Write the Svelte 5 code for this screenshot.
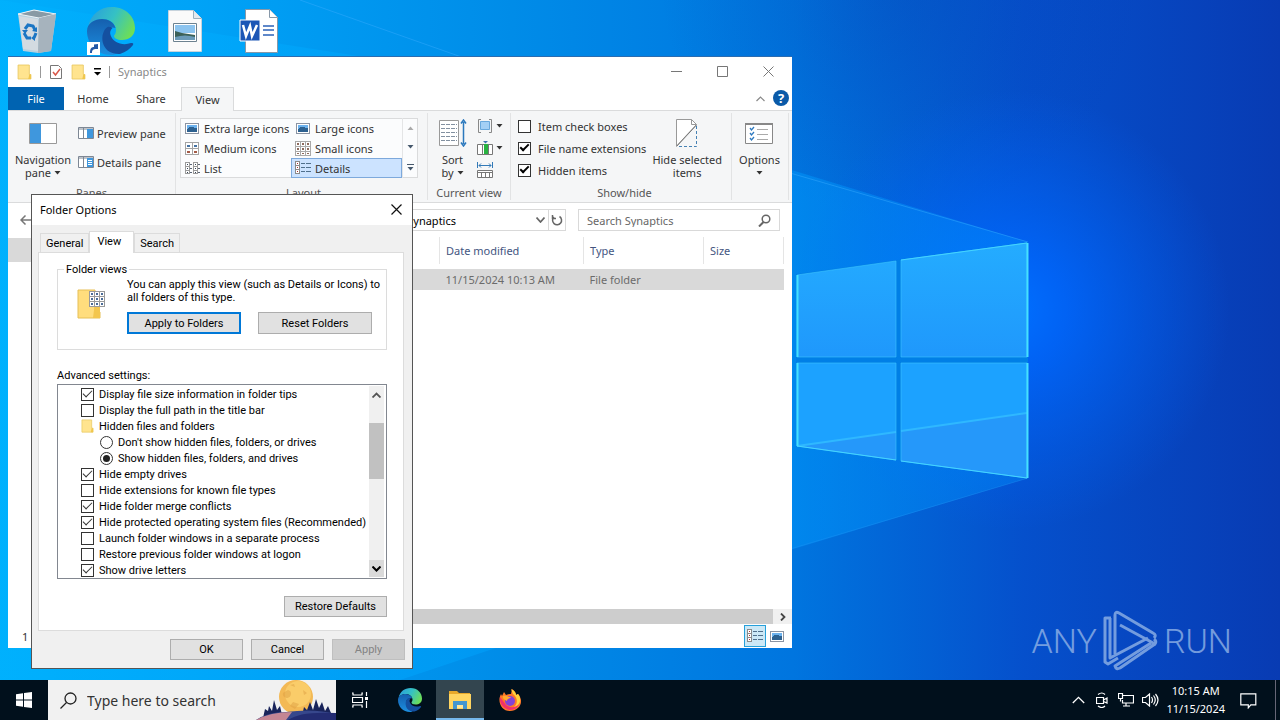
<script>
  /*
  * Explorer ribbon
  * */

  const tabs = ['Home', 'Share', 'View'];
  let activeTab = $state('View');

  const layouts = [
    { name: 'Extra large icons', icon: 'picture' },
    { name: 'Large icons', icon: 'picture' },
    { name: 'Medium icons', icon: 'medium' },
    { name: 'Small icons', icon: 'small' },
    { name: 'List', icon: 'list' },
    { name: 'Details', icon: 'details' },
  ];
  let layout = $state('Details');

  let showHide = $state([
    { label: 'Item check boxes', checked: false },
    { label: 'File name extensions', checked: true },
    { label: 'Hidden items', checked: true },
  ]);

  const files = [
    { name: '', modified: '11/15/2024 10:13 AM', type: 'File folder', size: '' },
  ];

  /*
  * Folder Options dialog
  * */

  const dialogTabs = ['General', 'View', 'Search'];
  let dialogTab = $state('View');

  let hiddenFiles = $state('show');

  let settings = $state([
    { label: 'Display file size information in folder tips', checked: true },
    { label: 'Display the full path in the title bar', checked: false },
    {
      label: 'Hidden files and folders',
      options: [
        { value: 'hide', label: "Don't show hidden files, folders, or drives" },
        { value: 'show', label: 'Show hidden files, folders, and drives' },
      ],
    },
    { label: 'Hide empty drives', checked: true },
    { label: 'Hide extensions for known file types', checked: false },
    { label: 'Hide folder merge conflicts', checked: true },
    { label: 'Hide protected operating system files (Recommended)', checked: true },
    { label: 'Launch folder windows in a separate process', checked: false },
    { label: 'Restore previous folder windows at logon', checked: false },
    { label: 'Show drive letters', checked: true },
  ]);
</script>

{#snippet folder(w, h)}
  <svg width={w} height={h} viewBox="0 0 14 16" preserveAspectRatio="none">
    <path d="M1 1h10.500v9.500H13V15H1z" fill="#ffe48f" stroke="#e8c860" stroke-width=".8" />
    <path d="M11.500 10.500H13V15h-2.500z" fill="#f0c64c" />
  </svg>
{/snippet}

{#snippet edge(size)}
  <svg width={size} height={size} viewBox="0 0 48 48">
    <path d="M1 20C4 7 13 0 25 0c14 0 23 10 23 21 0 8-6 12-13 12-5 0-8-2-8-4 0-1 2-2 2-6 0-6-6-11-13-11C9 12 3 15 1 20z" fill="url(#edge-green)" />
    <path d="M0 24C0 16 8 12 15 12c6 0 12 3 13.500 9-6-2-12.500 2-12.500 9 0 8 6 14 13 17-2 1-4 1-5 1C10 48 0 37 0 24z" fill="url(#edge-blue)" />
    <path d="M20.500 20c-9 6-7 28 12.500 27 6-2 10-5 13-9 1-2-1-2-2-2-8 3-18 0-20.500-8-1-3 0-5 2-7-1.500-1-3.500-1.500-5-1z" fill="#1450a0" />
  </svg>
{/snippet}

{#snippet layoutIcon(kind)}
  <svg width="16" height="16" viewBox="0 0 16 16" shape-rendering="crispEdges">
    {#if kind === 'picture'}
      <path d="M1.500 3.500h13v10h-13z" fill="#fff" stroke="#8b94a3" />
      <path d="M3 5h10v4H3z" fill="#6cb2ee" />
      <path d="M3 9l3-2 7 1v4H3z" fill="#2d6190" />
    {:else if kind === 'medium'}
      <path d="M1.500 2.500h13v12h-13zM8 2v13M1 8.500h14" fill="#fff" stroke="#a4a4a4" />
      <path d="M3 5h3v2H3zM10 5h3v2h-3z" fill="#4573a4" />
      <path d="M3 11h3v2H3zM10 11h3v2h-3z" fill="#a45c48" />
    {:else if kind === 'small'}
      <path d="M.500 1.500h15v14H.500zM5.500 1v15M10.500 1v15M0 6.500h16M0 11.500h16" fill="#fff" stroke="#a9a9a9" />
      <path d="M2 3h2v2H2zm5 0h2v2H7zm5 0h2v2h-2zM2 8h2v2H2zm5 0h2v2H7zm5 0h2v2h-2zM2 13h2v1H2zm5 0h2v1H7zm5 0h2v1h-2z" fill="#8d6a5c" />
    {:else if kind === 'list'}
      <path d="M1.500 2.500h4v11h-4zM1 6h5M1 10h5M9.500 2.500h4v11h-4zM9 6h5M9 10h5" fill="#fff" stroke="#9a9a9a" />
      <path d="M3 4h1v1H3zm0 4h1v1H3zm0 4h1v1H3zm8-8h1v1h-1zm0 4h1v1h-1zm0 4h1v1h-1z" fill="#345" />
      <path d="M6 4h2M6 8h2M6 12h2M14 4h2M14 8h2M14 12h2" stroke="#5a6575" />
    {:else}
      <path d="M.500 1.500h4v12h-4zM0 5.500h5M0 9.500h5" fill="#fff" stroke="#8a8a8a" />
      <path d="M2 3h1v1H2zm0 4h1v1H2zm0 4h1v1H2z" fill="#a33" />
      <path d="M6 3.500h4M11 3.500h5M6 7.500h4M11 7.500h5M6 11.500h4M11 11.500h5" stroke="#50708c" />
    {/if}
  </svg>
{/snippet}

{#snippet caret(color = '#333')}
  <svg class="caret" width="7" height="4" viewBox="0 0 7 4"><path d="M.500 0h6l-3 3.500z" fill={color} /></svg>
{/snippet}

<div class="screen">
  <main class="desktop">
    <svg class="wallpaper" viewBox="0 0 1280 720" preserveAspectRatio="xMidYMid slice">
      <defs>
        <linearGradient id="sky">
          <stop offset="0" stop-color="#00aefb" />
          <stop offset=".15" stop-color="#00a3f7" />
          <stop offset=".4" stop-color="#008ce8" />
          <stop offset=".62" stop-color="#0075df" />
          <stop offset=".8" stop-color="#0550cc" />
          <stop offset="1" stop-color="#083bb3" />
        </linearGradient>
        <radialGradient id="glow" gradientUnits="userSpaceOnUse" cx="1010" cy="310" r="220">
          <stop offset="0" stop-color="#0070ff" />
          <stop offset=".25" stop-color="#0068ff" stop-opacity=".8" />
          <stop offset="1" stop-color="#0060f0" stop-opacity="0" />
        </radialGradient>
        <radialGradient id="shade" gradientUnits="userSpaceOnUse" cx="900" cy="-20" r="240">
          <stop offset="0" stop-color="#083ba8" stop-opacity=".3" />
          <stop offset="1" stop-color="#083ba8" stop-opacity="0" />
        </radialGradient>
        <linearGradient id="beam">
          <stop offset="0" stop-color="#00b4ff" stop-opacity=".7" />
          <stop offset=".75" stop-color="#009dff" stop-opacity=".75" />
          <stop offset="1" stop-color="#0095ff" stop-opacity=".6" />
        </linearGradient>
        <linearGradient id="pane" x2="0" y2="1">
          <stop offset="0" stop-color="#24acff" />
          <stop offset="1" stop-color="#1f98fc" />
        </linearGradient>
        <linearGradient id="edge-green" x1="0" y1=".2" x2="1" y2=".6">
          <stop offset="0" stop-color="#2a9fdc" />
          <stop offset=".5" stop-color="#35c1c4" />
          <stop offset="1" stop-color="#6ede56" />
        </linearGradient>
        <linearGradient id="edge-blue" x2="0" y2="1">
          <stop offset="0" stop-color="#155fae" />
          <stop offset="1" stop-color="#1c8fe0" />
        </linearGradient>
      </defs>
      <path d="M0 0h1280v720H0z" fill="url(#sky)" />
      <path d="M0 0h1280v720H0z" fill="url(#shade)" />
      <path d="M0 0h1280v720H0z" fill="url(#glow)" />
      <path d="M0 0L480 75 1028 242V478L790 550 400 680H0z" fill="url(#beam)" opacity=".6" />
      <path d="M300 0L790 173 1028 242" fill="none" stroke="#39adff" opacity=".45" />
      <path d="M1028 478L790 549" fill="none" stroke="#2191f2" opacity=".4" />
      <path d="M796 274L1028 242V478L796 446z" fill="#007fe6" />
      <path d="M797 275L896 261V357H797zM901 260L1027 243V357H901z" fill="url(#pane)" />
      <path d="M797 363H896V460L797 446zM901 363H1027V478L901 461z" fill="#1ca2ff" />
      <path d="M797 446L896 432V460zM901 431L1027 413V478L901 461z" fill="#2598fa" />
      <path d="M797 446L896 432M901 431L1027 413" stroke="#2fb8ff" stroke-width="2" />
      <path d="M797 357V275L896 261V357zM901 357V260L1027 243V357zM797 363H896V460L797 446zM901 363H1027V478L901 461z" fill="none" stroke="#3cc4ff" opacity=".6" />
      <path d="M797.500 275V357M797.500 363V446M1027.500 478V363M1027.500 357V243" fill="none" stroke="#45e0ff" stroke-width="2" />
      <path d="M797 446L896 460M901 461L1027 478M1027 243L901 260" fill="none" stroke="#45d4ff" />
    </svg>

    <div class="shortcuts">
      <button aria-label="Recycle Bin">
        <svg width="40" height="44" viewBox="0 0 40 44">
          <path d="M1 5L17 1 39 5 34 42 21 44 6 42z" fill="#c6d3dc" opacity=".92" />
          <path d="M1 5L17 1 39 5 22 9z" fill="#889aa5" stroke="#eef4f8" />
          <path d="M22 9L39 5 34 42 21 44z" fill="#a6b3bd" />
          <path d="M2 7l19 3v32L6 40z" fill="#d3dbe1" />
          <path d="M8 20l3-4 5 1 2 4M7 24l3 5h4M19 24l-2 5" fill="none" stroke="#1b76c4" stroke-width="3" />
          <path d="M15 22l5 1 0-5zM5 21l6 0-3 4zM18 26v6l-4-3z" fill="#1b76c4" />
        </svg>
      </button>
      <button aria-label="Microsoft Edge" class="linked">
        {@render edge(48)}
        <svg class="arrow" width="13" height="13" viewBox="0 0 13 13">
          <path d="M0 0h13v13H0z" fill="#fff" />
          <path d="M3 11c0-4 1-6 4-6V2.500L11 2v5H9.500C6 7 5 8 5 11z" fill="#2458a6" />
        </svg>
      </button>
      <button aria-label="Image file">
        <svg width="34" height="42" viewBox="0 0 34 42">
          <path d="M.500.500h25l8 8v33H.500z" fill="#fafafa" stroke="#c7d3dc" />
          <path d="M25.500.500v8h8" fill="#e4e9ed" stroke="#9cb0be" />
          <path d="M5.500 13.500h23v18h-23z" fill="#fff" stroke="#6d8290" />
          <path d="M7 15h20v8H7z" fill="#8cc4ef" />
          <path d="M7 21l7 2 13 2v5H7z" fill="#3c6158" />
          <path d="M7 27q10-3 20 0v3H7z" fill="#6a9ab8" />
        </svg>
      </button>
      <button aria-label="Word document">
        <svg width="40" height="44" viewBox="0 0 40 44">
          <path d="M6.500.500h24l8 8v35h-32z" fill="#fff" stroke="#8798a8" />
          <path d="M30.500.500v8h8" fill="#fff" stroke="#8798a8" />
          <path d="M24 17h11M24 21h11M24 26h11" stroke="#2b62b8" stroke-width="1.500" />
          <path d="M1 11h20v21H1z" fill="#1c56b6" stroke="#fff" />
          <path d="M4 16l3 11 4-10 2 10 5-11" fill="none" stroke="#fff" stroke-width="2.500" />
        </svg>
      </button>
    </div>

    <div class="watermark">
      <span>ANY</span>
      <svg width="55" height="62" viewBox="0 0 55 62">
        <g fill="none" stroke="#8fb2e6" stroke-width="3" stroke-linejoin="round">
          <path d="M8 8L2 8 2 52 5 54 15 48" />
          <path d="M12 44V5Q12 1 16 3L50 23Q54 25 51 28" />
          <path d="M17 15L52 34Q54 31 51 29" />
          <path d="M7 8V48L45 28M52 34L17 58Q13 60 12 56L48 33" />
        </g>
      </svg>
      <span>RUN</span>
    </div>

    <section class="explorer">
      <header class="titlebar">
        {@render folder(15, 16)}
        <i></i>
        <svg width="14" height="16" viewBox="0 0 14 16">
          <path d="M1.500 1.500h8l3 3v10h-11z" fill="#fff" stroke="#777" />
          <path d="M4 8l2.500 3L11 5" fill="none" stroke="#d8584a" stroke-width="1.500" />
        </svg>
        {@render folder(15, 16)}
        <svg width="7" height="8" viewBox="0 0 7 8"><path d="M0 0h7v1.500H0zM0 4h7L3.500 7.500z" /></svg>
        <i></i>
        <span>Synaptics</span>
        <div class="controls">
          <button aria-label="Minimize"><svg width="11" height="11"><path d="M0 5.500h11" stroke="#777" /></svg></button>
          <button aria-label="Maximize"><svg width="11" height="11"><path d="M.500.500h10v10H.500z" fill="none" stroke="#777" /></svg></button>
          <button aria-label="Close"><svg width="11" height="11"><path d="M.500.500l10 10m0-10l-10 10" stroke="#777" /></svg></button>
        </div>
      </header>

      <nav class="tabs">
        <button class="file">File</button>
        {#each tabs as tab}
          <button class:active={tab === activeTab} onclick={() => activeTab = tab}>{tab}</button>
        {/each}
        <button class="collapse" aria-label="Collapse ribbon"><svg width="9" height="6"><path d="M.500 5L4.500 1l4 4" fill="none" stroke="#888" stroke-width="1.200" /></svg></button>
        <button class="help" aria-label="Help">?</button>
      </nav>

      <div class="ribbon">
        <div class="group panes">
          <div class="tools">
            <button class="big">
              <svg width="28" height="21"><path d="M.500.500h27v20H.500z" fill="#fff" stroke="#999" /><path d="M1 1h11v19H1z" fill="#3f97dd" /></svg>
              <span>Navigation<br />pane {@render caret()}</span>
            </button>
            <div class="stack">
              <button>
                <svg width="16" height="12"><path d="M.500.500h15v11H.500zM5.500 1v10M1 2h14" fill="#fff" stroke="#7d8794" /><path d="M9 2h6v9H9z" fill="#3f97dd" /></svg>
                Preview pane
              </button>
              <button>
                <svg width="16" height="12"><path d="M.500.500h15v11H.500zM5.500 1v10M1 2h14" fill="#fff" stroke="#7d8794" /><path d="M9 2h6v9H9z" fill="#3f97dd" /><path d="M10 4.500h4M10 6.500h4M10 8.500h4" stroke="#fff" /></svg>
                Details pane
              </button>
            </div>
          </div>
          <h4>Panes</h4>
        </div>

        <div class="group layouts">
          <div class="tools">
            <div class="gallery">
              <div class="choices">
                {#each layouts as item}
                  <button class:active={item.name === layout} onclick={() => layout = item.name}>
                    {@render layoutIcon(item.icon)}{item.name}
                  </button>
                {/each}
              </div>
              <div class="spinner">
                <button aria-label="Previous row"><svg width="7" height="4"><path d="M.500 4h6l-3-3.500z" fill="#aaa" /></svg></button>
                <button aria-label="Next row">{@render caret('#46586c')}</button>
                <button aria-label="More"><svg width="7" height="7"><path d="M0 0h7v1H0zM.500 3h6l-3 3.500z" fill="#46586c" /></svg></button>
              </div>
            </div>
          </div>
          <h4>Layout</h4>
        </div>

        <div class="group current">
          <div class="tools">
            <button class="big">
              <svg width="28" height="28" viewBox="0 0 28 28">
                <path d="M.500 1.500h19v25H.500z" fill="#fff" stroke="#999" />
                <path d="M2 5.500h16M2 9.500h16M2 13.500h16M2 17.500h16M2 21.500h16" stroke="#8290a0" stroke-dasharray="4 1" />
                <path d="M24.500 3v22M22 4.500L24.500 1 27 4.500M22 23.500l2.500 3.500 2.500-3.500" fill="none" stroke="#2b78bd" stroke-width="1.500" />
              </svg>
              <span>Sort<br />by {@render caret()}</span>
            </button>
            <div class="stack">
              <button aria-label="Group by">
                <svg width="16" height="16"><path d="M4 1.500H1.500v13H4M12 1.500h2.500v13H12" fill="none" stroke="#888" /><path d="M3.500 3.500h9v8h-9z" fill="#a4d0f5" stroke="#6aa9dd" /></svg>
                {@render caret()}
              </button>
              <button aria-label="Add columns">
                <svg width="16" height="16"><path d="M.500 4.500h15v10H.500zM5.500 5v9M11.500 5v9" fill="#fff" stroke="#777" /><path d="M7 4h4v10H7z" fill="#27b340" /><path d="M6 1h5L8.500 3.500z" fill="#3c74ac" /></svg>
                {@render caret()}
              </button>
              <button aria-label="Size all columns to fit">
                <svg width="16" height="16"><path d="M.500 8.500h15v7H.500zM0 10.500h16M4.500 10v5M8.500 10v5M12.500 10v5" fill="#fff" stroke="#777" /><path d="M.500 0v6M15.500 0v6M2 3.500h12M4 1.500l-2 2 2 2M12 1.500l2 2-2 2" fill="none" stroke="#3279b7" /></svg>
              </button>
            </div>
          </div>
          <h4>Current view</h4>
        </div>

        <div class="group showhide">
          <div class="tools">
            <div class="stack">
              {#each showHide as item}
                <label><input type="checkbox" class="bold" bind:checked={item.checked} />{item.label}</label>
              {/each}
            </div>
            <button class="big">
              <svg width="22" height="30" viewBox="0 0 22 30">
                <path d="M.500 28V1.500h15l5 5L.500 28z" fill="#fff" stroke="#999" />
                <path d="M15.500 1.500v5h5" fill="none" stroke="#999" />
                <path d="M20.500 8v20.500H1" fill="none" stroke="#4681b3" stroke-dasharray="3 2" />
                <path d="M.500 28.500L20.500 7" stroke="#777" />
              </svg>
              <span>Hide selected<br />items</span>
            </button>
          </div>
          <h4>Show/hide</h4>
        </div>

        <div class="group options">
          <div class="tools">
            <button class="big">
              <svg width="28" height="21" viewBox="0 0 28 21">
                <path d="M.500.500h27v20H.500z" fill="#fff" stroke="#888" />
                <path d="M0 0h28v2H0z" fill="#888" />
                <path d="M5 5l1.500 2L9 4M5 10l1.500 2L9 9M5 15l1.500 2L9 14" fill="none" stroke="#2f7ac0" stroke-width="1.300" />
                <path d="M12 6.500h11M12 11.500h11M12 16.500h11" stroke="#aaa" />
              </svg>
              <span>Options<br />{@render caret()}</span>
            </button>
          </div>
        </div>
      </div>

      <div class="navbar">
        <button aria-label="Back"><svg width="12" height="10"><path d="M12 5H1M5.500.500L1 5l4.500 4.500" fill="none" stroke="#777" stroke-width="1.500" /></svg></button>
        <div class="address">
          <span>Synaptics</span>
          <button aria-label="Previous locations"><svg width="9" height="6"><path d="M.500.500l4 4.500 4-4.500" fill="none" stroke="#666" stroke-width="1.700" /></svg></button>
          <button class="refresh" aria-label="Refresh"><svg width="12" height="12"><path d="M3 3A4.500 4.500 0 1 0 8.500 2.500M1.500 1V4.500H5" fill="none" stroke="#666" stroke-width="1.500" /></svg></button>
        </div>
        <label class="search">
          <input type="text" placeholder="Search Synaptics" aria-label="Search Synaptics" />
          <svg width="13" height="13"><circle cx="8" cy="5" r="3.800" fill="none" stroke="#666" stroke-width="1.500" /><path d="M5.500 8L1 12.500" stroke="#666" stroke-width="2" /></svg>
        </label>
      </div>

      <div class="content">
        <aside><div></div></aside>
        <div class="listing">
          <table>
            <thead>
              <tr><th aria-label="Name"></th><th>Date modified</th><th>Type</th><th>Size</th></tr>
            </thead>
            <tbody>
              {#each files as file}
                <tr><td>{file.name}</td><td>{file.modified}</td><td>{file.type}</td><td>{file.size}</td></tr>
              {/each}
            </tbody>
          </table>
          <div class="hscroll">
            <div class="thumb"></div>
            <button aria-label="Scroll right"><svg width="6" height="8"><path d="M1 .500L4.500 4 1 7.500" fill="none" stroke="#444" stroke-width="1.800" /></svg></button>
          </div>
        </div>
      </div>

      <footer class="status">
        <span>1</span>
        <button class="active" aria-label="Details view">{@render layoutIcon('details')}</button>
        <button aria-label="Large icons view">{@render layoutIcon('picture')}</button>
      </footer>
    </section>

    <section class="dialog" role="dialog" aria-label="Folder Options">
      <header>
        <span>Folder Options</span>
        <button aria-label="Close"><svg width="11" height="11"><path d="M.500.500l10 10m0-10l-10 10" stroke="#111" stroke-width="1.200" /></svg></button>
      </header>

      <nav>
        {#each dialogTabs as tab}
          <button class:active={tab === dialogTab} onclick={() => dialogTab = tab}>{tab}</button>
        {/each}
      </nav>

      <div class="panel">
        <fieldset>
          <legend>Folder views</legend>
          <div class="views">
            <svg width="28" height="32" viewBox="0 0 28 32">
              <path d="M1 2h17v22h5v6H1z" fill="#ffdd7d" stroke="#e6bf56" />
              <path d="M18 14h5v16h-7z" fill="#f3c64e" />
              {#each Array(9) as _, i}
                <rect x={12.5 + (i % 3) * 5} y={3.5 + Math.floor(i / 3) * 5} width="5" height="5" fill="#fff" stroke="#9a9a9a" />
                <rect x={14 + (i % 3) * 5} y={5 + Math.floor(i / 3) * 5} width="2" height="2" fill="#4b6c98" />
              {/each}
            </svg>
            <div>
              <p>You can apply this view (such as Details or Icons) to<br />all folders of this type.</p>
              <div class="pair">
                <button class="btn default">Apply to Folders</button>
                <button class="btn">Reset Folders</button>
              </div>
            </div>
          </div>
        </fieldset>

        <h5>Advanced settings:</h5>
        <div class="settings">
          <ul>
            {#each settings as item}
              {#if item.options}
                <li class="heading">{@render folder(13, 14)}{item.label}</li>
                {#each item.options as option}
                  <li class="nested">
                    <label><input type="radio" name="hidden-files" value={option.value} bind:group={hiddenFiles} />{option.label}</label>
                  </li>
                {/each}
              {:else}
                <li><label><input type="checkbox" bind:checked={item.checked} />{item.label}</label></li>
              {/if}
            {/each}
          </ul>
          <div class="vscroll">
            <button aria-label="Scroll up"><svg width="9" height="6"><path d="M.500 5.500l4-4 4 4" fill="none" stroke="#555" stroke-width="1.800" /></svg></button>
            <div class="track"><div class="thumb"></div></div>
            <button class="down" aria-label="Scroll down"><svg width="9" height="6"><path d="M.500.500l4 4 4-4" fill="none" stroke="#000" stroke-width="2" /></svg></button>
          </div>
        </div>

        <button class="btn restore">Restore Defaults</button>
      </div>

      <footer>
        <button class="btn">OK</button>
        <button class="btn">Cancel</button>
        <button class="btn" disabled>Apply</button>
      </footer>
    </section>
  </main>

  <footer class="taskbar">
    <button aria-label="Start"><svg width="16" height="16"><path d="M0 2.300L7 1.300V7.500H0zM8 1.100L16 0V7.500H8zM0 8.500H7V14.700L0 13.700zM8 8.500H16V16L8 14.900z" fill="#fff" /></svg></button>
    <label class="find">
      <svg width="17" height="17"><circle cx="10.500" cy="6.500" r="5.500" fill="none" stroke="#222" stroke-width="1.300" /><path d="M6.500 10.500L.500 16.500" stroke="#222" stroke-width="1.300" /></svg>
      <input type="text" placeholder="Type here to search" aria-label="Type here to search" />
      <svg width="80" height="40" viewBox="0 0 80 40">
        <circle cx="40" cy="17" r="17" fill="#f3b955" />
        <circle cx="42" cy="14" r="13" fill="#ffd976" opacity=".6" />
        <path d="M27 13a4 4 0 1 0 5-3zM37 22l6 2-4 5-5-3zM47 10l4 3-3 2zM34 5l4-1 1 3z" fill="#de9f43" opacity=".5" />
        <path d="M7 38l2-9 3 2 1-5 3 5 2-11 3 10 3-4 2 9 3-2 2 7zM46 36l2-9 3 3 3-8 3 8 3-11 3 9 3-6 3 9 3-5 3 7v6H46z" fill="#19245a" />
        <path d="M0 40q12-8 30-8 28-4 50 2v6z" fill="#37478c" />
        <path d="M0 40q14-8 36-8l-6 8z" fill="#c48694" />
        <path d="M32 40q12-9 48-7v7z" fill="#232c72" />
      </svg>
    </label>
    <button aria-label="Task View"><svg width="16" height="16"><path d="M0 1h1v2h9V1h1M0 15h1v-2h9v2h1M.500 5.500h10v5H.500zM14.500 0v4M14.500 9v7" fill="none" stroke="#fff" stroke-width="1.200" /><path d="M13 5h3v3h-3z" fill="#fff" /></svg></button>
    <button aria-label="Microsoft Edge" class="app">{@render edge(24)}</button>
    <button aria-label="File Explorer" class="running">
      <svg width="22" height="20" viewBox="0 0 22 20">
        <path d="M0 1h8l2 2h11v16H0z" fill="#e8a92b" />
        <path d="M0 4h22v15H0z" fill="#ffd561" />
        <path d="M4 11h14v8h-4v-4H8v4H4z" fill="#4396d0" />
        <path d="M8 15h6v3H8z" fill="#ffe69a" />
      </svg>
    </button>
    <button aria-label="Firefox" class="app">
      <svg width="24" height="24" viewBox="0 0 24 24">
        <path d="M12 23C3 23-1 13 3 6l1 2 2-4 2 3c3-1 4-1 5-1l1-5c3 2 4 4 4 6l2-1c7 8 1 17-8 17z" fill="#ff7828" />
        <path d="M2 9c-1 6 3 12 10 13 5 0 8-3 9-6-3 4-9 4-13 1z" fill="#f2306b" />
        <path d="M13 1l2 5c5 4 5 10 1 13 8-2 7-10 4-13l-2 1c0-3-3-5-5-6z" fill="#ffd33c" />
        <circle cx="12" cy="13" r="5" fill="#8343d6" />
        <path d="M5 8c3-1 5 1 8 1-1 2-4 1-4 4-2-1-5-2-4-5z" fill="#ffaa2c" />
      </svg>
    </button>

    <div class="tray">
      <button aria-label="Show hidden icons"><svg width="13" height="8"><path d="M.800 7L6.500 1.300 12.200 7" fill="none" stroke="#fff" stroke-width="1.300" /></svg></button>
      <button aria-label="Meet Now"><svg width="12" height="16"><path d="M.500 5.500h7v6h-7zM7.500 8l3.500-2v5L7.500 9.500M2 2.500q4-3 7 0M2 14q4 3 7 0" fill="none" stroke="#fff" stroke-width="1.200" /></svg></button>
      <button aria-label="Network"><svg width="16" height="14"><path d="M5 2.500h10.500v7.500H4.500V7M8 10v3M5 13h7M.500.500h4v5h-4zM2.500 5.500v3" fill="none" stroke="#fff" stroke-width="1.200" /></svg></button>
      <button aria-label="Volume"><svg width="17" height="14"><path d="M.500 4.500h3l4-3.500v12l-4-3.500h-3zM9.500 4q2 3 0 6M11.500 2.500q3.500 4.500 0 9M13.500 1q5 6 0 12" fill="none" stroke="#fff" stroke-width="1.200" /></svg></button>
      <time>10:15 AM<br />11/15/2024</time>
      <button class="notes" aria-label="Notifications"><svg width="17" height="17"><path d="M.800 1.800h15v11h-5l-2.500 3v-3H.800z" fill="none" stroke="#fff" stroke-width="1.200" /></svg></button>
      <i></i>
    </div>
  </footer>
</div>

<style>
  :global(body) {
    margin: 0;
  }

  .screen {
    display: grid;
    grid-template-rows: 1fr 40px;
    height: 100vh;
    overflow: hidden;
    font: 11px/13px 'Noto Sans', 'Open Sans', sans-serif;
    color: #333;
  }

  .screen :global(svg) {
    flex: none;
  }

  button {
    display: flex;
    align-items: center;
    justify-content: center;
    margin: 0;
    padding: 0;
    border: 0;
    background: none;
    font: inherit;
    color: inherit;
    white-space: nowrap;
  }

  input {
    margin: 0;
    font: inherit;
    color: inherit;
  }

  h4, h5, p, ul {
    margin: 0;
    padding: 0;
    font-weight: normal;
    font-size: inherit;
  }

  input[type='text'] {
    flex: 1;
    min-width: 0;
    padding: 0;
    border: 0;
    outline: 0;
    background: none;
  }

  input[type='text']::placeholder {
    color: inherit;
    opacity: 1;
  }

  input[type='checkbox'],
  input[type='radio'] {
    appearance: none;
    display: grid;
    place-items: center;
    flex: none;
    width: 13px;
    height: 13px;
    border: 1px solid #333;
    background: #fff;
  }

  input[type='radio'] {
    border-radius: 50%;
  }

  input[type='checkbox']:checked::before {
    content: '';
    width: 9px;
    height: 5px;
    margin-bottom: 3px;
    border: solid #333;
    border-width: 0 0 1px 1px;
    box-sizing: border-box;
    transform: rotate(-45deg);
  }

  input.bold:checked::before {
    border-width: 0 0 2px 2px;
    border-color: #000;
  }

  input[type='radio']:checked::before {
    content: '';
    width: 7px;
    height: 7px;
    border-radius: 50%;
    background: #222;
  }

  /* desktop */

  .desktop {
    position: relative;
    overflow: hidden;
    background: #0078d7;
  }

  .wallpaper {
    position: absolute;
    top: 0;
    left: 0;
    width: 100%;
    height: 100vh;
  }

  .shortcuts {
    position: relative;
    display: flex;
    width: 296px;
    height: 62px;
  }

  .shortcuts button {
    flex: 1;
  }

  .linked {
    position: relative;
  }

  .linked .arrow {
    position: absolute;
    left: 13px;
    bottom: 7px;
  }

  .watermark {
    position: absolute;
    right: 48px;
    bottom: 8px;
    display: flex;
    align-items: center;
    gap: 6px;
    font: 300 34px/62px Roboto, 'Liberation Sans', sans-serif;
    color: #8fb2e6;
    opacity: .8;
  }

  /* explorer window */

  .explorer {
    position: absolute;
    top: 56px;
    left: 8px;
    bottom: 32px;
    width: 61.25%;
    display: flex;
    flex-direction: column;
    border-top: 1px solid #2b6cb0;
    box-sizing: border-box;
    background: #fff;
  }

  .titlebar {
    display: flex;
    align-items: center;
    gap: 8px;
    height: 30px;
    padding: 0 1px 1px 9px;
    box-sizing: border-box;
    color: #888;
  }

  .titlebar i {
    width: 1px;
    height: 12px;
    background: #999;
  }

  .controls {
    display: flex;
    align-self: stretch;
    margin-left: auto;
  }

  .controls button {
    width: 46px;
  }

  .tabs {
    display: flex;
    height: 24px;
    border-bottom: 1px solid #dadbdc;
    box-sizing: border-box;
  }

  .tabs button {
    width: 58px;
  }

  .tabs .file {
    width: 56px;
    background: #0063b1;
    color: #fff;
  }

  .tabs .active {
    width: 53px;
    height: 24px;
    margin-left: 1px;
    border: 1px solid #dadbdc;
    border-bottom: 0;
    box-sizing: border-box;
    background: #f5f6f7;
  }

  .tabs .collapse {
    width: 20px;
    margin-left: auto;
  }

  .tabs .help {
    width: 16px;
    height: 16px;
    margin: 3px;
    border-radius: 50%;
    background: #0a5aa8;
    color: #fff;
    font-size: 13px;
    font-weight: bold;
  }

  .ribbon {
    display: flex;
    height: 92px;
    border-bottom: 1px solid #dadbdc;
    box-sizing: border-box;
    background: #f5f6f7;
  }

  .group {
    display: flex;
    flex-direction: column;
    margin: 2px 0;
    padding-top: 2px;
    border-right: 1px solid #e2e3e4;
    box-sizing: border-box;
  }

  .group h4 {
    margin-top: auto;
    padding-bottom: 1px;
    text-align: center;
    color: #555;
  }

  .tools {
    display: flex;
  }

  .stack {
    display: flex;
    flex-direction: column;
    align-items: flex-start;
  }

  .stack button,
  .stack label {
    display: flex;
    align-items: center;
    height: 22px;
    gap: 3px;
  }

  .stack label {
    gap: 7px;
    white-space: nowrap;
  }

  .big {
    display: grid;
    grid-template-rows: 32px auto;
    align-content: start;
    justify-content: center;
    justify-items: center;
    align-items: center;
    gap: 4px;
    padding-top: 2px;
  }

  .big :global(.caret) {
    vertical-align: 2px;
  }

  .panes {
    width: 168px;
  }

  .panes .big {
    width: 70px;
  }

  .panes .stack {
    gap: 7px;
    padding-top: 7px;
  }

  .layouts {
    width: 252px;
    padding-left: 4px;
  }

  .gallery {
    display: flex;
    margin-top: 3px;
    background: #fbfcfd;
    box-shadow: inset 0 0 0 1px #dadbdc;
  }

  .choices {
    display: grid;
    grid-template-columns: 111px 111px;
    grid-auto-rows: 20px;
    height: 60px;
  }

  .choices button {
    justify-content: flex-start;
    gap: 4px;
    padding-left: 3px;
    border: 1px solid transparent;
    box-sizing: border-box;
  }

  .choices .active {
    border-color: #7da9dc;
    background: #cce3ff;
  }

  .spinner {
    display: grid;
    width: 15px;
    border-left: 1px solid #e4e5e6;
  }

  .current {
    width: 83px;
  }

  .current .big {
    width: 49px;
  }

  .showhide {
    width: 221px;
    padding-left: 7px;
  }

  .showhide .big {
    margin-left: 6px;
  }

  .options {
    width: 57px;
  }

  .options .big {
    width: 55px;
  }

  .navbar {
    display: flex;
    align-items: center;
    gap: 12px;
    height: 34px;
    padding: 0 12px;
  }

  .address,
  .search {
    display: flex;
    align-items: center;
    height: 22px;
    border: 1px solid #d9d9d9;
    box-sizing: border-box;
  }

  .address {
    flex: 1;
    margin-left: 80px;
    color: #000;
  }

  .address span {
    margin-left: auto;
    margin-right: 76px;
  }

  .address button {
    align-self: stretch;
    width: 16px;
  }

  .address .refresh {
    width: 17px;
    border-left: 1px solid #d9d9d9;
  }

  .search {
    flex: 0 0 202px;
    padding: 0 8px;
    color: #666;
  }

  .content {
    flex: 1;
    display: flex;
    min-height: 0;
  }

  aside {
    width: 160px;
  }

  aside div {
    height: 24px;
    margin-top: 1px;
    background: #d9d9d9;
  }

  .listing {
    flex: 1;
    display: flex;
    flex-direction: column;
    justify-content: space-between;
  }

  table {
    width: calc(100% - 8px);
    table-layout: fixed;
    border-collapse: collapse;
  }

  th, td {
    padding: 0 0 0 6px;
    text-align: left;
    font-weight: normal;
  }

  th {
    height: 27px;
    border-right: 1px solid #e5e5e5;
    color: #44557f;
  }

  th:nth-child(2) {
    width: 137px;
  }

  th:nth-child(3) {
    width: 113px;
  }

  th:nth-child(4) {
    width: 73px;
  }

  tbody::before {
    content: '';
    display: block;
    height: 5px;
  }

  tbody tr {
    background: #d9d9d9;
    color: #6b6b6b;
  }

  td {
    height: 21px;
  }

  .hscroll {
    display: flex;
    height: 15px;
    background: #f0f0f0;
  }

  .hscroll .thumb {
    flex: 1;
    background: #cdcdcd;
  }

  .hscroll button {
    width: 19px;
  }

  .status {
    display: flex;
    align-items: center;
    height: 24px;
    padding: 0 4px 0 14px;
  }

  .status span {
    margin-right: auto;
  }

  .status button {
    width: 22px;
    height: 22px;
    border: 1px solid transparent;
    box-sizing: border-box;
  }

  .status .active {
    border-color: #26a0da;
    background: #cbe8f6;
  }

  /* folder options dialog */

  .dialog {
    position: absolute;
    top: 194px;
    left: 31px;
    width: 382px;
    border: 1px solid #555;
    box-sizing: border-box;
    background: #f0f0f0;
    color: #000;
    font: 11px/13px Roboto, 'Liberation Sans', Arial, sans-serif;
  }

  .dialog header {
    display: flex;
    align-items: center;
    justify-content: space-between;
    height: 30px;
    padding: 0 10px 2px 8px;
    box-sizing: border-box;
    background: #fff;
    font: 11px/13px 'Noto Sans', 'Open Sans', sans-serif;
  }

  .dialog nav {
    display: flex;
    align-items: flex-end;
    height: 27px;
    padding-left: 8px;
  }

  .dialog nav button {
    height: 19px;
    padding: 0 5px;
    border: 1px solid #dcdcdc;
    border-bottom: 0;
    box-sizing: border-box;
  }

  .dialog nav .active {
    position: relative;
    height: 22px;
    margin-bottom: -1px;
    padding: 0 12px 3px 7px;
    background: #fff;
  }

  .panel {
    display: flex;
    flex-direction: column;
    margin: 0 8px 0 6px;
    padding: 10px 16px 13px 18px;
    border: 1px solid #dcdcdc;
    background: #fff;
  }

  fieldset {
    min-width: 0;
    margin: 0;
    padding: 0 14px 15px 19px;
    border: 1px solid #dcdcdc;
  }

  legend {
    margin-left: -13px;
    padding: 0 2px;
  }

  .views {
    display: flex;
    gap: 22px;
    padding-top: 2px;
    white-space: nowrap;
  }

  .views > svg {
    margin-top: 10px;
  }

  .pair {
    display: flex;
    gap: 17px;
    margin-top: 8px;
  }

  .btn {
    width: 73px;
    height: 21px;
    border: 1px solid #adadad;
    box-sizing: border-box;
    background: #e1e1e1;
  }

  .pair .btn {
    width: 114px;
    height: 22px;
  }

  .btn.default {
    border: 2px solid #0078d7;
  }

  .btn:disabled {
    border-color: #bfbfbf;
    background: #ccc;
    color: #838383;
  }

  h5 {
    margin-top: 19px;
  }

  .settings {
    display: flex;
    height: 195px;
    margin-top: 2px;
    padding: 1px;
    border: 1px solid #828790;
    box-sizing: border-box;
    overflow: hidden;
  }

  .settings ul {
    flex: 1;
    padding-left: 22px;
    list-style: none;
    white-space: nowrap;
  }

  .settings li,
  .settings label {
    display: flex;
    align-items: center;
    gap: 5px;
    height: 16px;
  }

  .settings .nested {
    padding-left: 19px;
  }

  .vscroll {
    display: flex;
    flex-direction: column;
    width: 15px;
    margin-right: 1px;
    background: #f0f0f0;
  }

  .vscroll button {
    height: 17px;
  }

  .vscroll .down {
    background: #dadada;
  }

  .track {
    flex: 1;
    padding-top: 20px;
  }

  .track .thumb {
    height: 56px;
    background: #c1c1c1;
  }

  .restore {
    align-self: flex-end;
    width: 103px;
    margin-top: 17px;
  }

  .dialog footer {
    display: flex;
    justify-content: flex-end;
    gap: 8px;
    padding: 8px 7px;
  }

  /* taskbar */

  .taskbar {
    position: relative;
    display: flex;
    background: #01101c;
    color: #fff;
  }

  .taskbar > button {
    width: 48px;
  }

  .taskbar > .app {
    width: 52px;
  }

  .taskbar .running {
    box-sizing: border-box;
    padding-top: 2px;
    border-bottom: 2px solid #76b9ed;
    background: #33454f;
  }

  .find {
    display: flex;
    align-items: center;
    gap: 10px;
    width: 288px;
    padding-left: 12px;
    box-sizing: border-box;
    background: #f1f1f1;
    color: #333;
    font-size: 14px;
  }

  .tray {
    display: flex;
    align-items: center;
    margin-left: auto;
    gap: 8px;
  }

  .tray button {
    width: 16px;
    height: 40px;
  }

  .tray time {
    line-height: 18px;
    text-align: center;
  }

  .tray .notes {
    width: 30px;
  }

  .tray i {
    width: 4px;
    height: 40px;
    margin-left: 4px;
    border-left: 1px solid #667;
  }
</style>
